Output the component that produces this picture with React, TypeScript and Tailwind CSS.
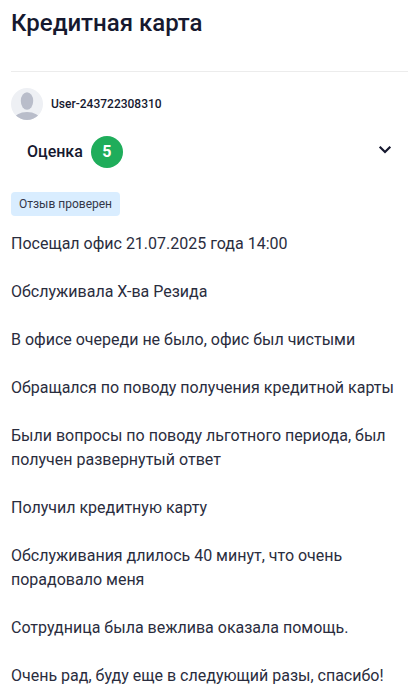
import React from "react";

const paragraphs = [
  "Посещал офис 21.07.2025 года 14:00",
  "Обслуживала Х-ва Резида",
  "В офисе очереди не было, офис был чистыми",
  "Обращался по поводу получения кредитной карты",
  "Были вопросы по поводу льготного периода, был получен развернутый ответ",
  "Получил кредитную карту",
  "Обслуживания длилось 40 минут, что очень порадовало меня",
  "Сотрудница была вежлива оказала помощь.",
  "Очень рад, буду еще в следующий разы, спасибо!",
];

const Avatar = () => {
  return (
    <svg viewBox="0 0 32 32" className="size-8" aria-hidden="true">
      <clipPath id="avatar-circle">
        <circle cx="16" cy="16" r="16" />
      </clipPath>
      <g clipPath="url(#avatar-circle)">
        <rect width="32" height="32" fill="#eef0f4" />
        <ellipse cx="16" cy="13" rx="6.2" ry="8.7" fill="#b9bdca" />
        <ellipse cx="16" cy="32" rx="13" ry="8" fill="#b9bdca" />
      </g>
    </svg>
  );
};

const ChevronDown = () => {
  return (
    <svg viewBox="0 0 24 24" className="size-6" fill="none" aria-hidden="true">
      <path d="m6.7 8.7 5.3 5.3 5.3-5.3" stroke="currentColor" strokeWidth="2.2" />
    </svg>
  );
};

const App = () => {
  return (
    <main className="bg-white px-[11px] pt-[9px] pb-3 font-[Roboto,sans-serif] text-[#16192f]">
      <h1 className="text-2xl leading-7 font-medium">Кредитная карта</h1>
      <hr className="mt-[34px] -mr-2 border-[#ececec]" />

      <div className="mt-4 flex items-center gap-2">
        <Avatar />
        <span className="text-xs leading-4 font-medium">User-243722308310</span>
      </div>

      <div className="mt-4 flex items-center justify-between pr-[3px] pl-4">
        <div className="flex items-center gap-2">
          <span className="text-base font-medium">Оценка</span>
          <span className="flex size-8 items-center justify-center rounded-full bg-[#1fad5b] text-base font-bold text-white">
            5
          </span>
        </div>
        <button type="button" aria-label="Показать оценки" className="mb-1">
          <ChevronDown />
        </button>
      </div>

      <div className="mt-6 flex">
        <span className="rounded bg-[#d9edff] px-2 py-1 text-xs leading-4 text-[#333748]">
          Отзыв проверен
        </span>
      </div>

      <div className="mt-4 flex flex-col gap-6 text-base leading-6 text-[#2a2d3e]">
        {paragraphs.map((text) => (
          <p key={text}>{text}</p>
        ))}
      </div>
    </main>
  );
};

export default App;
